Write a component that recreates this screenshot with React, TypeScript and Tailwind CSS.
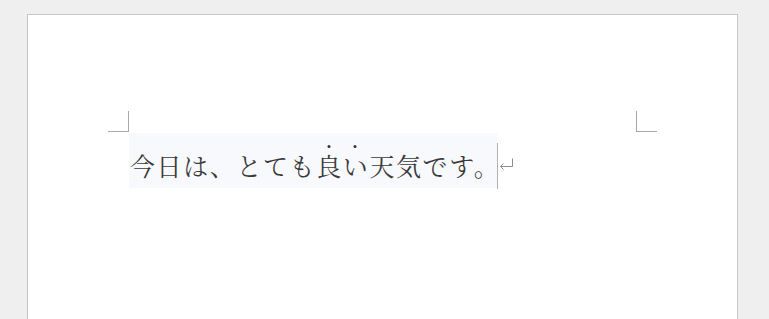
import React from "react";

const Dot = ({ children }: { children: React.ReactNode }) => (
  <span className="relative">
    {children}
    <span className="absolute left-[calc(50%-1px)] top-[-2px] h-[3px] w-[3px] -translate-x-1/2 rounded-full bg-[#333]" />
  </span>
);

export default function App() {
  return (
    <div className="h-[319px] w-[769px] overflow-hidden bg-[#efefef] pl-[27px] pt-[14px]">
      <div className="h-[400px] w-[711px] border border-[#c6c6c6] bg-white">
        <div className="ml-[80px] mt-[96px] flex w-[549px] justify-between">
          <div className="h-[21px] w-[21px] border-b border-r border-[#a8a8a8]" />
          <div className="h-[21px] w-[21px] border-b border-l border-[#a8a8a8]" />
        </div>
        <div className="ml-[101px] mt-[1px] flex items-start">
          <div
            className="flex h-[55px] w-[368px] items-center bg-[#f8f9fc] pl-[1px] pt-[10px] text-[25px] leading-none tracking-[1.6px] text-[#3a3a3a]"
            style={{ fontFamily: '"Noto Serif CJK JP", "Noto Sans CJK JP", serif' }}
          >
            <span className="whitespace-nowrap">
              今日は、とても<Dot>良</Dot><Dot>い</Dot>天気です。
            </span>
          </div>
          <div className="mt-[10px] h-[46px] w-px bg-[#b0b0b0]" />
          <svg className="ml-[1px] mt-[25px]" width="15" height="12" viewBox="0 0 15 12" fill="none" stroke="#8c8c8c" strokeWidth="1">
            <path d="M13.5 0.5 V8.5 H1.5" />
            <path d="M4.5 5.5 L1.5 8.5 L4.5 11.5" />
          </svg>
        </div>
      </div>
    </div>
  );
}
